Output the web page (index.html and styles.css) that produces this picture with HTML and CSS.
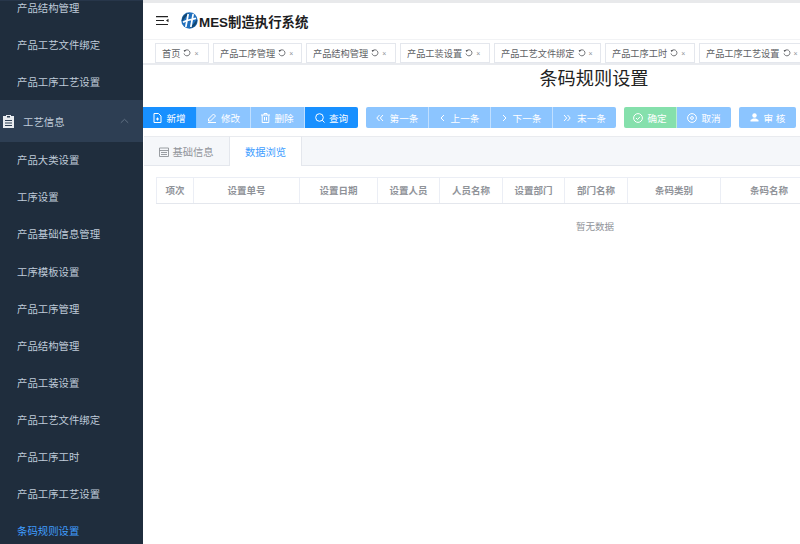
FILE: index.html
```html
<!DOCTYPE html>
<html lang="zh">
<head>
<meta charset="utf-8">
<title>条码规则设置</title>
<link rel="stylesheet" href="styles.css">
</head>
<body>
<svg class="defs" width="0" height="0"><symbol id="re" viewBox="0 0 8 8"><path d="M1.800 1.700A3 3 0 1 1 1 4.500" fill="none" stroke="#606266" stroke-width=".9"/><path d="M.6.9 3.300.9 1.600 3.200z" fill="#606266"/></symbol></svg>
<div class="app">
  <aside class="side">
    <ul class="menu">
      <li class="item first">产品结构管理</li>
      <li class="item">产品工艺文件绑定</li>
      <li class="item">产品工序工艺设置</li>
      <li class="group">
        <svg class="g-ico" width="11" height="14" viewBox="0 0 11 14"><path fill="#e8ebef" d="M0 2h3V1h5v1h3v12H0zM2 6v1h7V6zm0 2.500v1h7v-1zm0 2.500v1h7v-1z"/><rect x="4" y="2" width="3" height="1.500" fill="#2d3e53"/></svg>
        <span class="g-text">工艺信息</span>
        <svg class="g-arrow" width="9" height="6" viewBox="0 0 9 6"><path d="M.8 4.800 4.500 1.300l3.700 3.500" fill="none" stroke="#5f6f82" stroke-width="1"/></svg>
      </li>
      <li class="item">产品大类设置</li>
      <li class="item">工序设置</li>
      <li class="item">产品基础信息管理</li>
      <li class="item">工序模板设置</li>
      <li class="item">产品工序管理</li>
      <li class="item">产品结构管理</li>
      <li class="item">产品工装设置</li>
      <li class="item">产品工艺文件绑定</li>
      <li class="item">产品工序工时</li>
      <li class="item">产品工序工艺设置</li>
      <li class="item active">条码规则设置</li>
    </ul>
  </aside>
  <main class="main">
    <header class="head">
      <svg class="burger" width="13" height="10" viewBox="0 0 13 10"><path d="M0 .6h12M0 4.500h8M0 8.500h12" stroke="#222" stroke-width="1.200" fill="none"/><path d="M12.500 2.800 10 4.500l2.500 1.700z" fill="#222"/></svg>
      <svg class="logo" width="17" height="17" viewBox="0 0 17 17">
        <circle cx="8.500" cy="8.500" r="8.200" fill="#1f6fbd"/>
        <path d="M1 9.500A7.500 7.500 0 0 1 8 1L5.500 4z" fill="#12466f"/>
        <path d="M16 7.500A7.500 7.500 0 0 1 9 16l2.500-3z" fill="#12466f"/>
        <path d="M7.200 2 4.800 15M12.200 2 9.800 15M2 10.200c4-2.500 9-2.500 13-4" fill="none" stroke="#fff" stroke-width="1.700"/>
      </svg>
      <span class="brand">MES制造执行系统</span>
    </header>
    <nav class="tags">
      <span class="tag w54">首页<svg class="re"><use href="#re"/></svg><i class="x">×</i></span>
      <span class="tag w89">产品工序管理<svg class="re"><use href="#re"/></svg><i class="x">×</i></span>
      <span class="tag w90">产品结构管理<svg class="re"><use href="#re"/></svg><i class="x">×</i></span>
      <span class="tag w90">产品工装设置<svg class="re"><use href="#re"/></svg><i class="x">×</i></span>
      <span class="tag w107">产品工艺文件绑定<svg class="re"><use href="#re"/></svg><i class="x">×</i></span>
      <span class="tag w90">产品工序工时<svg class="re"><use href="#re"/></svg><i class="x">×</i></span>
      <span class="tag w107">产品工序工艺设置<svg class="re"><use href="#re"/></svg><i class="x">×</i></span>
    </nav>
    <h1 class="title">条码规则设置</h1>
    <div class="toolbar">
      <div class="btns">
        <button class="btn w54 solid"><svg width="9" height="10" viewBox="0 0 9 10"><path d="M1 .5h4.500L8 3v6.500H1z M3 6h3M4.500 4.500v3" fill="none" stroke="#fff"/></svg>新增</button>
        <button class="btn w54 pale"><svg width="10" height="10" viewBox="0 0 10 10"><path d="M6.500 1 8.500 3 3.500 8H1.500V6zM1 9.500h8" fill="none" stroke="#fff"/></svg>修改</button>
        <button class="btn w54 pale"><svg width="9" height="10" viewBox="0 0 9 10"><path d="M0 2h9M3 2V.5h3V2M1.200 2v7.500h6.600V2M3.500 4v3.500M5.500 4v3.500" fill="none" stroke="#fff"/></svg>删除</button>
        <button class="btn w53 solid end"><svg width="10" height="10" viewBox="0 0 10 10"><circle cx="4.500" cy="4.500" r="3.800" fill="none" stroke="#fff"/><path d="M7.300 7.300 9.500 9.500" stroke="#fff"/></svg>查询</button>
      </div>
      <div class="btns">
        <button class="btn w63 pale start wide"><svg width="8" height="8" viewBox="0 0 8 8"><path d="M3.500 1 .8 4l2.700 3M7 1 4.300 4 7 7" fill="none" stroke="#fff"/></svg>第一条</button>
        <button class="btn w62 pale wide"><svg width="5" height="8" viewBox="0 0 5 8"><path d="M4 1 1 4l3 3" fill="none" stroke="#fff"/></svg>上一条</button>
        <button class="btn w62 pale wide"><svg width="5" height="8" viewBox="0 0 5 8"><path d="M1 1l3 3-3 3" fill="none" stroke="#fff"/></svg>下一条</button>
        <button class="btn w63 pale end wide"><svg width="8" height="8" viewBox="0 0 8 8"><path d="M1 1l2.700 3L1 7M4.500 1l2.700 3-2.700 3" fill="none" stroke="#fff"/></svg>末一条</button>
      </div>
      <div class="btns">
        <button class="btn w53 green start"><svg width="10" height="10" viewBox="0 0 10 10"><circle cx="5" cy="5" r="4.400" fill="none" stroke="#fff"/><path d="M3 5l1.500 1.500L7 3.800" fill="none" stroke="#fff"/></svg>确定</button>
        <button class="btn w54 pale end"><svg width="10" height="10" viewBox="0 0 10 10"><circle cx="5" cy="5" r="4.400" fill="none" stroke="#fff"/><circle cx="5" cy="5" r="1.400" fill="none" stroke="#fff"/></svg>取消</button>
      </div>
      <div class="btns">
        <button class="btn w57 pale start end spaced"><svg width="9" height="9" viewBox="0 0 9 9"><circle cx="4.500" cy="2.500" r="2.200" fill="#fff"/><path d="M.5 8.500h8V7L6 5.500H3L.5 7z" fill="#fff"/></svg>审 核</button>
      </div>
    </div>
    <div class="tabs">
      <div class="tab plain"><svg width="10" height="10" viewBox="0 0 10 10"><path d="M.5 1h9v8.500h-9zM.5 3.500h9M2 5.500h6M2 7.500h6" fill="none" stroke="#909399" stroke-width=".9"/></svg>基础信息</div>
      <div class="tab on">数据浏览</div>
    </div>
    <div class="panel">
      <div class="sheet">
        <table class="grid">
          <colgroup>
            <col class="c37"><col class="c106"><col class="c78"><col class="c62"><col class="c63"><col class="c62"><col class="c63"><col class="c93"><col class="c314">
          </colgroup>
          <thead>
            <tr><th>项次</th><th>设置单号</th><th>设置日期</th><th>设置人员</th><th>人员名称</th><th>设置部门</th><th>部门名称</th><th>条码类别</th><th class="last">条码名称</th></tr>
          </thead>
        </table>
        <p class="empty">暂无数据</p>
      </div>
    </div>
  </main>
</div>
</body>
</html>
```
FILE: styles.css
```css
* { box-sizing: border-box; }
html, body { margin: 0; height: 100%; overflow: hidden; background: #fff; }
body { font-family: "Liberation Sans", "Noto Sans CJK SC", sans-serif; font-size: 10px; color: #606266; }
.defs { display: block; height: 0; }
.app { display: flex; width: 800px; height: 544px; overflow: hidden; }

.side { flex: 0 0 143px; background: #1f2d3d; border-top: 1px solid #27364a; overflow: hidden; }
.menu { list-style: none; margin: -11px 0 0; padding: 0; }
.item { height: 37.100px; line-height: 37px; padding-left: 17px; font-size: 10.400px; color: #bfcbd9; white-space: nowrap; }
.item.active { color: #409eff; }
.group { display: flex; align-items: center; height: 42px; margin-top: -1px; background: #2d3e53; color: #bfcbd9; padding-left: 3px; }
.g-ico { margin-right: 9px; }
.g-text { font-size: 10.400px; }
.g-arrow { margin-left: auto; margin-right: 14px; }

.main { flex: 1; min-width: 0; display: flex; flex-direction: column; border-top: 3px solid #e8e9eb; overflow: hidden; }
.head { display: flex; align-items: center; height: 36px; flex: none; padding-left: 13px; padding-bottom: 1px; }
.burger { margin-right: 12px; }
.logo { margin-right: 1px; }
.brand { font-size: 13.400px; font-weight: 700; color: #1d1d1f; white-space: nowrap; }

.tags { display: flex; flex: none; gap: 4px; height: 26px; padding: 3px 0 0 12px; background: #fff; border-top: 1px solid #f2f3f5; border-bottom: 2px solid #e9ebef; overflow: hidden; }
.tag { flex: none; display: flex; align-items: center; height: 20px; padding-left: 6px; border: 1px solid #e4e7ed; font-size: 9.200px; color: #606266; white-space: nowrap; }
.tag.w54 { width: 54px; }
.tag.w89 { width: 89px; }
.tag.w90 { width: 90px; }
.tag.w107 { width: 107px; }
.re { width: 8px; height: 8px; margin-left: 3px; flex: none; }
.x { margin-left: 3px; font-style: normal; font-size: 7px; color: #909399; }

.title { flex: none; width: 902px; height: 27px; margin: 1px 0 -1px; text-align: center; font-size: 18.200px; font-weight: 400; line-height: 27px; color: #222; }

.toolbar { display: flex; flex: none; gap: 8px; height: 21px; margin-top: 15px; }
.btns { display: flex; flex: none; }
.btn { display: flex; align-items: center; justify-content: center; gap: 4px; height: 21px; padding: 0; border: 0; border-right: 1px solid rgba(255,255,255,.45); color: #fff; font: inherit; font-size: 9.600px; }
.btn:last-child { border-right: 0; }
.w53 { width: 53px; }
.w54 { width: 54px; }
.w57 { width: 57px; }
.w62 { width: 62px; }
.w63 { width: 63px; }
.solid { background: #1890ff; }
.pale { background: #8cc5ff; }
.green { background: #85e0ac; }
.start { border-radius: 2px 0 0 2px; }
.end { border-radius: 0 2px 2px 0; }
.start.end { border-radius: 2px; }
.wide { gap: 6px; }
.spaced { gap: 5px; }

.tabs { display: flex; flex: none; height: 30px; margin-top: 8px; margin-left: 1px; background: #f5f7fa; border-top: 1px solid #e9ebef; border-bottom: 1px solid #e4e7ed; }
.tab { display: flex; align-items: center; justify-content: center; gap: 3px; height: 29px; font-size: 10.300px; }
.plain { width: 85px; color: #909399; }
.on { width: 73px; margin-top: -1px; height: 30px; background: #fff; color: #409eff; border-left: 1px solid #e4e7ed; border-right: 1px solid #e4e7ed; border-top: 1px solid #e9ebef; }

.panel { flex: 1; padding: 11px 0 0 13px; overflow: hidden; }
.sheet { width: 878px; }
.grid { width: 878px; table-layout: fixed; border-collapse: collapse; border-top: 1px solid #ebeef5; border-left: 1px solid #ebeef5; }
.grid th { height: 26px; padding: 0 0 2px; font-size: 9.500px; font-weight: 700; color: #909399; border-right: 1px solid #ebeef5; border-bottom: 1px solid #e4e7ed; }
.grid th.last { text-align: left; padding-left: 29px; }
.c37 { width: 37px; }
.c106 { width: 106px; }
.c78 { width: 78px; }
.c62 { width: 62px; }
.c63 { width: 63px; }
.c93 { width: 93px; }
.c314 { width: 314px; }
.empty { margin: 17px 0 0; text-align: center; font-size: 9.500px; line-height: 12px; color: #909399; }
```
